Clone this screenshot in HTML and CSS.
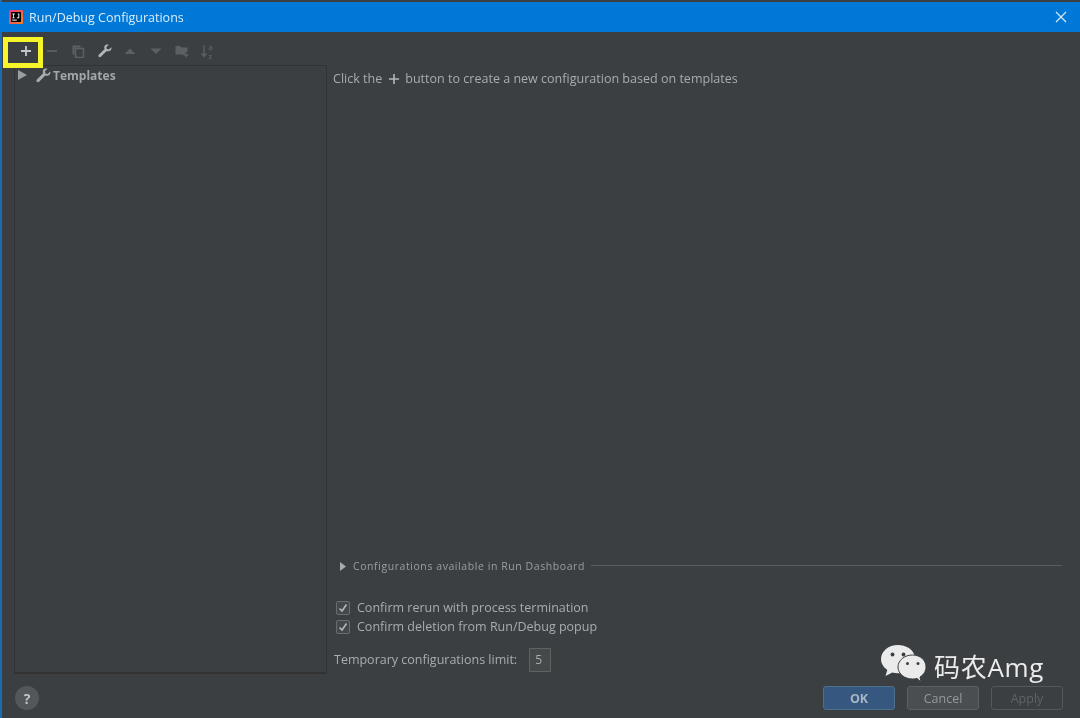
FILE: index.html
```html
<!DOCTYPE html>
<html lang="en">
<head>
<meta charset="utf-8">
<title>Run/Debug Configurations</title>
<link rel="stylesheet" href="styles.css">
</head>
<body>
<div class="window">
  <header class="titlebar">
    <svg class="app-logo" width="14" height="14" viewBox="0 0 14 14"><defs><linearGradient id="lg" x1="0" y1="0" x2="1" y2="1"><stop offset="0" stop-color="#f5317f"/><stop offset="1" stop-color="#fc801d"/></linearGradient></defs><rect width="14" height="14" rx="1" fill="url(#lg)"/><rect x="2" y="2" width="10" height="10" fill="#000"/><rect x="3.2" y="9.6" width="4.6" height="1" fill="#fff"/><path d="M3.4 3.6h2.4v.8h-.8v3h.8v.8H3.4v-.8h.8v-3h-.8zM8.8 3.6h1.5v3.6c0 .8-.5 1.2-1.3 1.2-.6 0-1-.2-1.3-.6l.6-.6c.2.2.4.3.6.3.3 0 .5-.2.5-.5V4.400H8.800z" fill="#fff"/></svg>
    <span class="title">Run/Debug Configurations</span>
    <svg class="close" width="12" height="12" viewBox="0 0 12 12"><path d="M1 1l10 10M11 1L1 11" stroke="#d6e9f8" stroke-width="1.2" fill="none"/></svg>
  </header>
  <div class="toolbar">
    <div class="tool tool-add"><svg width="14" height="14" viewBox="0 0 14 14"><path d="M7 2v10M2 7h10" stroke="#c4c7c9" stroke-width="1.8"/></svg></div>
    <div class="tool"><svg width="14" height="14" viewBox="0 0 14 14"><path d="M2 7h10" stroke="#5c6063" stroke-width="1.8"/></svg></div>
    <div class="tool"><svg width="14" height="14" viewBox="0 0 14 14"><path d="M1.500 1.500h8v2h-6v7h-2z" fill="#5c6063"/><rect x="4.500" y="4.500" width="8" height="9" fill="none" stroke="#5c6063" stroke-width="1.600"/></svg></div>
    <div class="tool tool-wrench"><svg width="14" height="14" viewBox="0 0 14 14"><path d="M13.300 3.200l-2.500 2.300-2-.4-.5-2L10.800.7C9.200.1 7.500.5 6.800 1.700c-.7 1.100-.6 2.300-.1 3.300L.8 10.700c-.6.6-.6 1.500 0 2.100.6.6 1.500.6 2.100 0l5.800-5.800c1 .4 2.200.4 3.300-.3 1.300-.9 1.800-2.400 1.300-3.500z" fill="#b4b7b9"/></svg></div>
    <div class="tool"><svg width="14" height="14" viewBox="0 0 14 14"><path d="M1.500 10L7 4.500 12.500 10z" fill="#5c6063"/></svg></div>
    <div class="tool"><svg width="14" height="14" viewBox="0 0 14 14"><path d="M1.500 4.500L7 10l5.500-5.500z" fill="#5c6063"/></svg></div>
    <div class="tool"><svg width="14" height="14" viewBox="0 0 14 14"><path d="M.5 2h4.500l1.500 1.500h6V8H10v2.500H.5z" fill="#5c6063"/><path d="M11 8.500v5M8.500 11h5" stroke="#5c6063" stroke-width="1.400"/></svg></div>
    <div class="tool"><svg width="16" height="20" viewBox="0 0 16 20"><path d="M4 4v11M1.500 12.500L4 15.500l2.500-3" stroke="#5c6063" stroke-width="1.400" fill="none"/><text x="8.500" y="9" class="sort-letter">a</text><text x="8.500" y="17.500" class="sort-letter">z</text></svg></div>
  </div>
  <div class="main">
    <aside class="tree">
      <div class="tree-row">
        <svg class="tree-arrow" width="9" height="10" viewBox="0 0 9 10"><path d="M0 0l9 5-9 5z" fill="#9b9ea0"/></svg>
        <svg class="tree-icon" width="15" height="15" viewBox="0 0 14 14"><path d="M13.300 3.200l-2.500 2.300-2-.4-.5-2L10.800.7C9.200.1 7.500.5 6.800 1.700c-.7 1.100-.6 2.300-.1 3.300L.8 10.700c-.6.6-.6 1.500 0 2.100.6.6 1.500.6 2.100 0l5.800-5.800c1 .4 2.200.4 3.300-.3 1.300-.9 1.800-2.400 1.300-3.500z" fill="#a8abad"/></svg>
        <span class="tree-label">Templates</span>
      </div>
    </aside>
    <section class="panel">
      <p class="hint">Click the <svg class="hint-plus" width="12" height="12" viewBox="0 0 12 12"><path d="M6 1v10M1 6h10" stroke="#b5b8ba" stroke-width="1.600"/></svg> button to create a new configuration based on templates</p>
      <div class="spacer"></div>
      <div class="dash-row">
        <svg width="6" height="9" viewBox="0 0 6 9"><path d="M0 0l6 4.500L0 9z" fill="#a8abad"/></svg>
        <span class="dash-label">Configurations available in Run Dashboard</span>
        <span class="dash-line"></span>
      </div>
      <div class="check-row first"><span class="checkbox"><svg width="10" height="10" viewBox="0 0 10 10"><path d="M1.500 5.500L4 8l4.500-6.500" stroke="#b8bbbd" stroke-width="1.500" fill="none"/></svg></span>Confirm rerun with process termination</div>
      <div class="check-row"><span class="checkbox"><svg width="10" height="10" viewBox="0 0 10 10"><path d="M1.500 5.500L4 8l4.500-6.500" stroke="#b8bbbd" stroke-width="1.500" fill="none"/></svg></span>Confirm deletion from Run/Debug popup</div>
      <div class="limit-row"><span class="limit-text">Temporary configurations limit:</span><span class="limit-box">5</span></div>
    </section>
  </div>
  <footer class="footer">
    <div class="help">?</div>
    <div class="buttons">
      <div class="btn btn-ok">OK</div>
      <div class="btn btn-cancel">Cancel</div>
      <div class="btn btn-apply">Apply</div>
    </div>
  </footer>
</div>
<div class="highlight"></div>
<div class="watermark">
  <svg width="48" height="42" viewBox="0 0 48 42"><path d="M18 1C8.600 1 1 7.200 1 15c0 4.400 2.500 8.300 6.300 10.900L5.500 32l6.800-3.500c1.800.5 3.700.8 5.700.8 1 0 2-.1 3-.2C33 23 35 13 34.500 11 32.500 5.200 26 1 18 1z" fill="#ebebeb"/><path d="M32.500 11C24.500 11 18 16.300 18 23s6.500 12 14.500 12c1.600 0 3.100-.2 4.500-.6L41 38l-1-5c3.700-2.300 6-5.900 6-10 0-6.700-5.500-12-13.500-12z" fill="#ebebeb" stroke="#3c3f41" stroke-width="1"/><circle cx="12.500" cy="10.500" r="1.900" fill="#3c3f41"/><circle cx="23.500" cy="10.500" r="1.900" fill="#3c3f41"/><circle cx="27.500" cy="19.500" r="1.500" fill="#3c3f41"/><circle cx="38" cy="19.500" r="1.500" fill="#3c3f41"/></svg>
  <span class="wm-text">码农Amg</span>
</div>
</body>
</html>
```
FILE: styles.css
```css
* { box-sizing: border-box; }
html, body { margin: 0; padding: 0; width: 1080px; height: 718px; overflow: hidden; background: #3c3f41; }
body { font-family: "Open Sans", "Noto Sans", sans-serif; color: #a9acae; font-size: 12.500px; position: relative; filter: blur(.35px); }
.window { width: 1080px; height: 718px; display: flex; flex-direction: column; padding-top: 2px; border-left: 2px solid #1c6cb0; background: #3c3f41; }
.titlebar { height: 30px; background: #0078d7; margin-left: -2px; padding: 0 13px 0 9px; display: flex; align-items: center; flex: none; }
.app-logo { flex: none; margin-right: 6px; }
.title { color: #d9ecfa; font-size: 12.500px; flex: 1; }
.close { flex: none; }
.toolbar { height: 33px; flex: none; display: flex; align-items: center; padding: 4px 0 0 11px; }
.tool { width: 26px; height: 26px; display: flex; align-items: center; justify-content: center; flex: none; }
.tool-wrench { padding-left: 2px; }
.main { height: 609px; flex: none; display: flex; padding-left: 12px; }
.tree { width: 313px; flex: none; border: 1px solid #323232; border-bottom-width: 2px; padding: 2px 0 0 3px; }
.tree-row { display: flex; align-items: center; height: 14px; }
.tree-arrow { flex: none; margin-right: 9px; }
.tree-icon { flex: none; margin-right: 3px; }
.tree-label { font-weight: 700; font-size: 12px; color: #a3a6a8; margin-left: -1px; }
.panel { flex: 1; display: flex; flex-direction: column; padding-left: 7px; padding-right: 17px; }
.hint { margin: 5px 0 0 -1px; line-height: 18px; font-size: 12.540px; height: 18px; white-space: nowrap; display: flex; align-items: center; }
.hint-plus { margin: 0 5px 0 6px; flex: none; }
.spacer { flex: 1; }
.dash-row { display: flex; align-items: center; height: 16px; padding-left: 6px; }
.dash-label { margin-left: 7px; font-size: 10.500px; letter-spacing: .57px; color: #9b9ea0; white-space: nowrap; }
.dash-line { flex: 1; height: 1px; background: #5a5d5f; margin-left: 6px; margin-top: -1px; margin-right: 1px; }
.check-row { display: flex; align-items: center; height: 19px; padding-left: 3px; white-space: nowrap; font-size: 12.500px; }
.check-row.first { margin-top: 24px; }
.checkbox { width: 14px; height: 14px; border: 1px solid #6b6e70; border-radius: 2px; background: #45484a; margin-right: 7px; display: flex; align-items: center; justify-content: center; flex: none; margin-left: -1px; }
.limit-row { display: flex; align-items: center; height: 24px; margin: 12px 0 2px 0; font-size: 12.500px; }
.limit-text { padding-bottom: 2px; }
.limit-box { width: 22px; height: 24px; border: 1px solid #5f6264; background: #45494a; margin-left: 12px; padding-left: 5px; line-height: 21px; font-size: 12px; }
.footer { flex: 1; display: flex; justify-content: space-between; align-items: center; padding: 4px 17px 0 13px; }
.help { width: 24px; height: 24px; border-radius: 50%; background: #53575a; color: #c0c3c5; font-weight: 700; font-size: 14px; display: flex; align-items: center; justify-content: center; }
.buttons { display: flex; gap: 12px; }
.btn { width: 72px; height: 24px; border-radius: 3px; border: 1px solid #5c6063; display: flex; align-items: center; justify-content: center; font-size: 12.500px; }
.btn-ok { background: #365880; border-color: #4c708c; color: #a8b5c2; font-weight: 700; }
.btn-cancel { background: #4b4e50; color: #96999b; }
.btn-apply { background: transparent; color: #5f6366; border-color: #55585a; }
.highlight { position: absolute; left: 3px; top: 37px; width: 40px; height: 31px; border: 5px solid #f5f52a; }
.watermark { position: absolute; left: 880px; top: 644px; display: flex; align-items: flex-start; }
.watermark svg { flex: none; }
.wm-text { font-family: "Open Sans", "Noto Sans CJK SC", sans-serif; font-size: 26px; letter-spacing: .7px; color: #ececec; margin-left: 6px; margin-top: 3px; line-height: 40px; white-space: nowrap; }
.sort-letter { font-family: "Open Sans", sans-serif; font-size: 7px; font-weight: 700; fill: #5c6063; }
```
